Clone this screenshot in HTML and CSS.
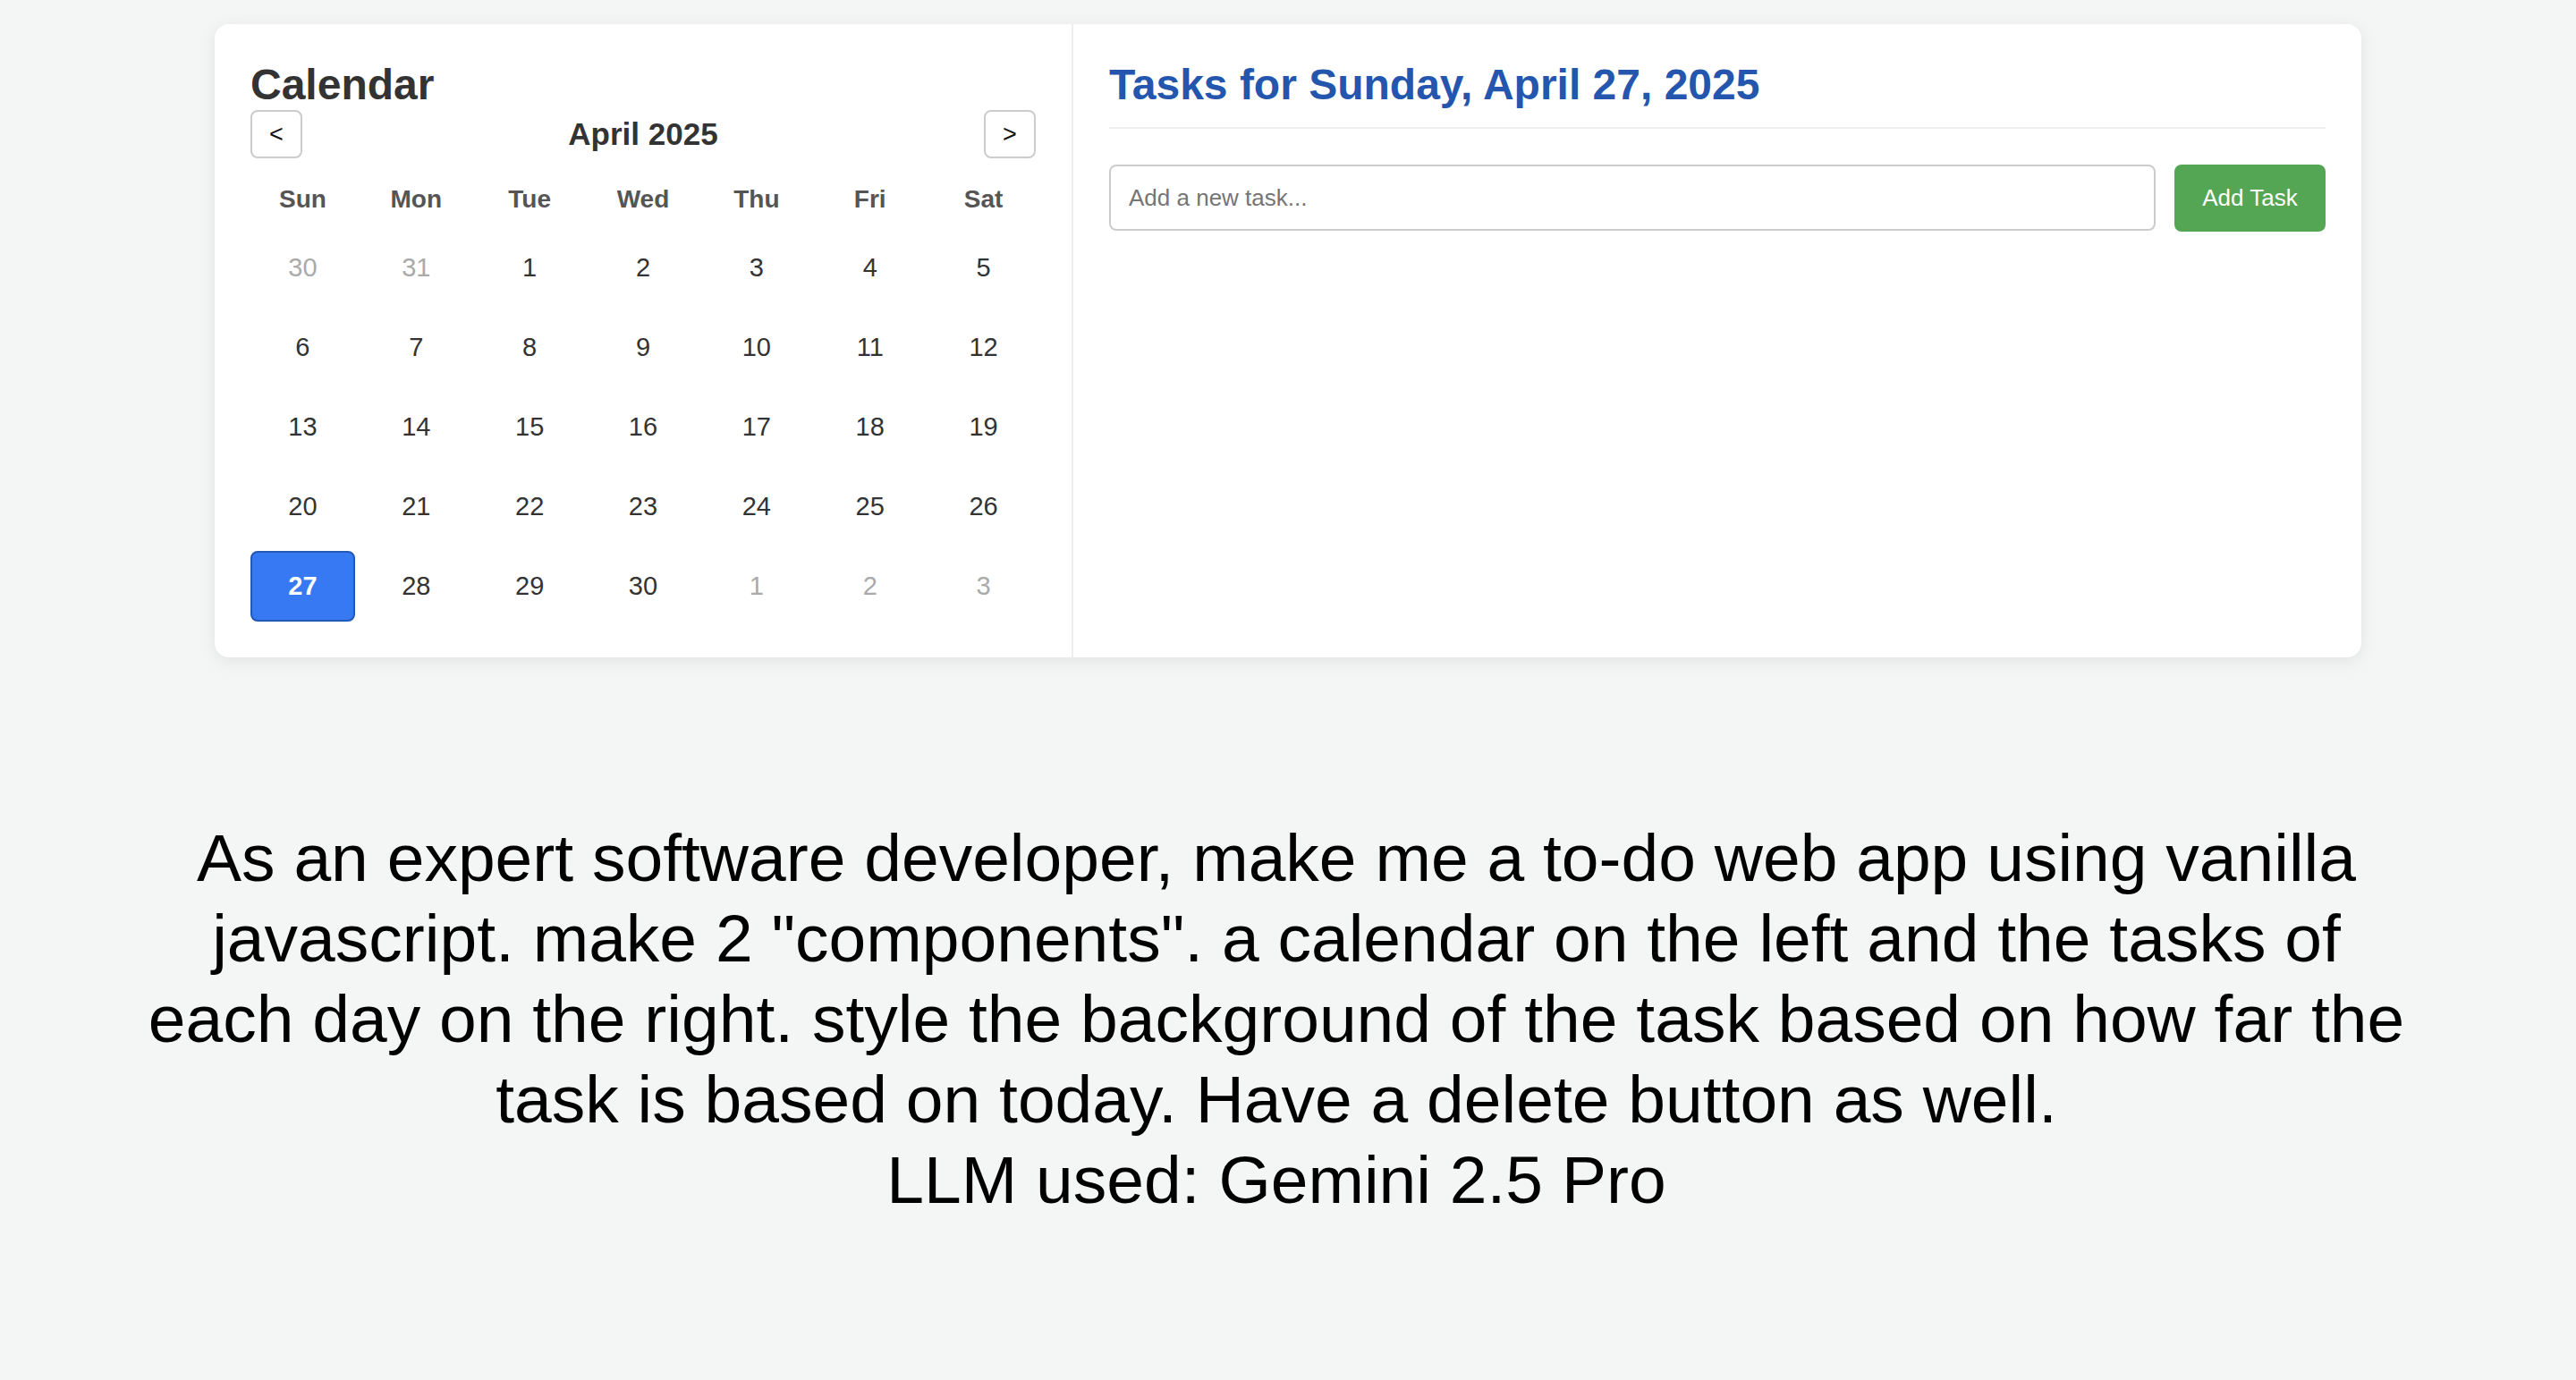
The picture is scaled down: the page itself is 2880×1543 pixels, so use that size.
FILE: index.html
```html
<!DOCTYPE html>
<html lang="en">
<head>
<meta charset="utf-8">
<title>Calendar To-Do</title>
<link rel="stylesheet" href="styles.css">
</head>
<body>
<div class="page">
  <div class="app">
    <section class="calendar-panel">
      <h2 class="panel-title">Calendar</h2>
      <div class="cal-nav">
        <button class="nav-btn">&lt;</button>
        <div class="month-label">April 2025</div>
        <button class="nav-btn">&gt;</button>
      </div>
      <div class="cal-grid">
        <div class="wd">Sun</div><div class="wd">Mon</div><div class="wd">Tue</div><div class="wd">Wed</div><div class="wd">Thu</div><div class="wd">Fri</div><div class="wd">Sat</div>
        <div class="day other">30</div><div class="day other">31</div><div class="day">1</div><div class="day">2</div><div class="day">3</div><div class="day">4</div><div class="day">5</div>
        <div class="day">6</div><div class="day">7</div><div class="day">8</div><div class="day">9</div><div class="day">10</div><div class="day">11</div><div class="day">12</div>
        <div class="day">13</div><div class="day">14</div><div class="day">15</div><div class="day">16</div><div class="day">17</div><div class="day">18</div><div class="day">19</div>
        <div class="day">20</div><div class="day">21</div><div class="day">22</div><div class="day">23</div><div class="day">24</div><div class="day">25</div><div class="day">26</div>
        <div class="day selected">27</div><div class="day">28</div><div class="day">29</div><div class="day">30</div><div class="day other">1</div><div class="day other">2</div><div class="day other">3</div>
      </div>
    </section>
    <section class="tasks-panel">
      <h2 class="tasks-title">Tasks for Sunday, April 27, 2025</h2>
      <div class="add-row">
        <input class="task-input" type="text" placeholder="Add a new task...">
        <button class="add-btn">Add Task</button>
      </div>
    </section>
  </div>
  <p class="caption">As an expert software developer, make me a to-do web app using vanilla<br>javascript. make 2 "components". a calendar on the left and the tasks of<br>each day on the right. style the background of the task based on how far the<br>task is based on today. Have a delete button as well.<br>LLM used: Gemini 2.5 Pro</p>
</div>
</body>
</html>
```

FILE: styles.css
```css
html, body {
  margin: 0;
  padding: 0;
  background: #f4f6f5;
  font-family: "Liberation Sans", Arial, Helvetica, sans-serif;
}

.page {
  padding-top: 27px;
}

.app {
  width: 2400px;
  height: 708px;
  margin: 0 auto;
  display: flex;
  background: #ffffff;
  border-radius: 16px;
  box-shadow: 0 4px 20px rgba(0, 0, 0, 0.08);
  box-sizing: border-box;
}

.calendar-panel {
  width: 960px;
  box-sizing: border-box;
  padding: 40px;
  border-right: 2px solid #eeeeee;
}

.panel-title {
  margin: 0;
  font-size: 48px;
  line-height: 56px;
  font-weight: bold;
  color: #333333;
}

.cal-nav {
  display: flex;
  align-items: center;
  justify-content: space-between;
  height: 54px;
  margin-bottom: 19px;
}

.nav-btn {
  width: 58px;
  height: 54px;
  box-sizing: border-box;
  background: #ffffff;
  border: 2px solid #cccccc;
  border-radius: 8px;
  font-family: "Liberation Sans", Arial, sans-serif;
  font-size: 27px;
  color: #111111;
  padding: 0;
}

.month-label {
  font-size: 35px;
  font-weight: bold;
  color: #333333;
}

.cal-grid {
  display: grid;
  grid-template-columns: repeat(7, 1fr);
  grid-template-rows: 54px repeat(5, 79px);
  column-gap: 10px;
  row-gap: 10px;
}

.wd {
  display: flex;
  align-items: center;
  justify-content: center;
  font-size: 28px;
  font-weight: bold;
  color: #555555;
}

.day {
  display: flex;
  align-items: center;
  justify-content: center;
  font-size: 29px;
  color: #333333;
  border: 2px solid transparent;
  border-radius: 8px;
  box-sizing: border-box;
}

.day.other {
  color: #aaaaaa;
}

.day.selected {
  background: #3779f3;
  border-color: #2358b5;
  color: #ffffff;
  font-weight: bold;
}

.tasks-panel {
  flex: 1;
  box-sizing: border-box;
  padding: 40px;
}

.tasks-title {
  margin: 0 0 40px 0;
  padding-bottom: 19px;
  border-bottom: 2px solid #eeeeee;
  font-size: 48px;
  line-height: 56px;
  font-weight: bold;
  color: #2456ae;
}

.add-row {
  display: flex;
  align-items: flex-start;
  gap: 21px;
}

.task-input {
  flex: 1;
  height: 74px;
  box-sizing: border-box;
  border: 2px solid #cccccc;
  border-radius: 8px;
  padding: 0 20px;
  font-family: "Liberation Sans", Arial, sans-serif;
  font-size: 26px;
  color: #333333;
  outline: none;
}

.task-input::placeholder {
  color: #757575;
}

.add-btn {
  width: 169px;
  height: 75px;
  border: none;
  border-radius: 8px;
  background: #54a654;
  color: #ffffff;
  font-family: "Liberation Sans", Arial, sans-serif;
  font-size: 26px;
  padding: 0;
}

.caption {
  margin: 179px 0 0 0;
  padding-right: 26px;
  text-align: center;
  font-size: 75px;
  line-height: 90px;
  color: #000000;
}
```
